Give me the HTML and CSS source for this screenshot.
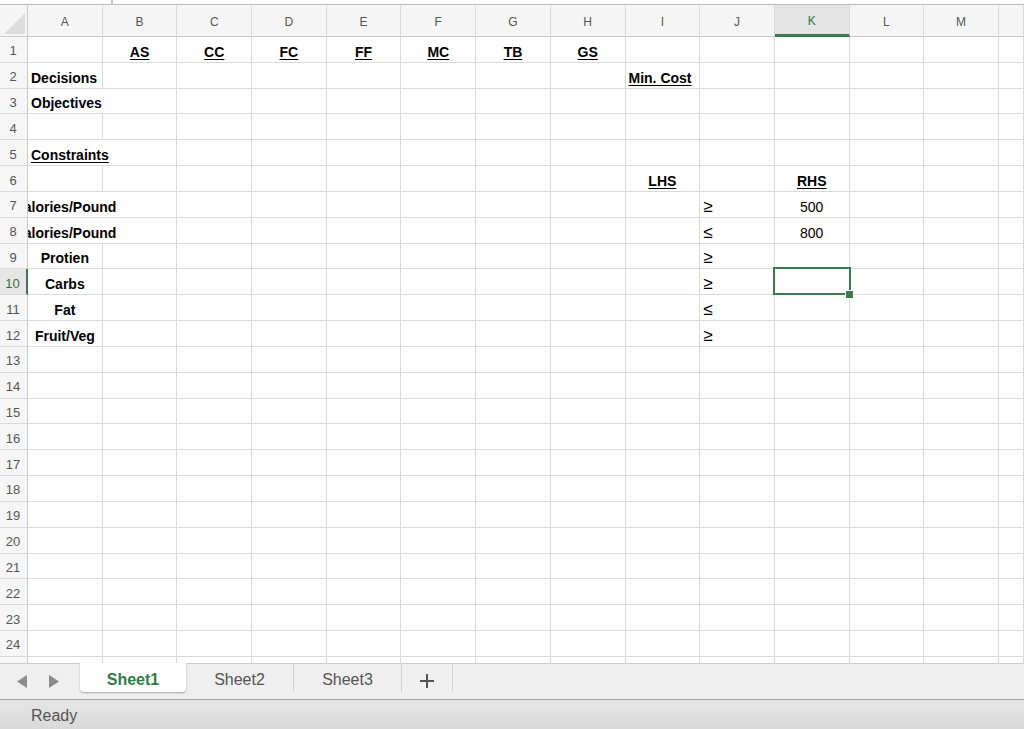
FILE: index.html
```html
<!DOCTYPE html>
<html lang="en">
<head>
<meta charset="utf-8">
<title>Sheet1</title>
<link rel="stylesheet" href="styles.css">
</head>
<body>
<div class="app">
  <div class="formula-edge"><span class="tick"></span></div>
  <div class="sheet">
    <div class="r h">
      <div class="corner"><svg width="21" height="21" viewBox="0 0 21 21"><polygon points="21,0 21,21 0,21" fill="#dcdcdc"/></svg></div>
      <div>A</div><div>B</div><div>C</div><div>D</div><div>E</div><div>F</div><div>G</div><div>H</div><div>I</div><div>J</div><div class="hk">K</div><div>L</div><div>M</div><div></div>
    </div>
    <div class="r"><div class="rh">1</div><div></div><div class="c u">AS</div><div class="c u">CC</div><div class="c u">FC</div><div class="c u">FF</div><div class="c u">MC</div><div class="c u">TB</div><div class="c u">GS</div><div></div><div></div><div></div><div></div><div></div><div></div></div>
    <div class="r"><div class="rh">2</div><div>Decisions</div><div></div><div></div><div></div><div></div><div></div><div></div><div></div><div class="u">Min. Cost</div><div></div><div></div><div></div><div></div><div></div></div>
    <div class="r"><div class="rh">3</div><div class="s2">Objectives</div><div></div><div></div><div></div><div></div><div></div><div></div><div></div><div></div><div></div><div></div><div></div><div></div></div>
    <div class="r"><div class="rh">4</div><div></div><div></div><div></div><div></div><div></div><div></div><div></div><div></div><div></div><div></div><div></div><div></div><div></div><div></div></div>
    <div class="r"><div class="rh">5</div><div class="s2 u">Constraints</div><div></div><div></div><div></div><div></div><div></div><div></div><div></div><div></div><div></div><div></div><div></div><div></div></div>
    <div class="r"><div class="rh">6</div><div></div><div></div><div></div><div></div><div></div><div></div><div></div><div></div><div class="c u">LHS</div><div></div><div class="c u">RHS</div><div></div><div></div><div></div></div>
    <div class="r"><div class="rh">7</div><div class="s2 ctr"><span class="ovc">Calories/Pound</span></div><div></div><div></div><div></div><div></div><div></div><div></div><div></div><div class="op">≥</div><div class="c n">500</div><div></div><div></div><div></div></div>
    <div class="r"><div class="rh">8</div><div class="s2 ctr"><span class="ovc">Calories/Pound</span></div><div></div><div></div><div></div><div></div><div></div><div></div><div></div><div class="op">≤</div><div class="c n">800</div><div></div><div></div><div></div></div>
    <div class="r"><div class="rh">9</div><div class="c">Protien</div><div></div><div></div><div></div><div></div><div></div><div></div><div></div><div></div><div class="op">≥</div><div></div><div></div><div></div><div></div></div>
    <div class="r"><div class="rh rk">10</div><div class="c">Carbs</div><div></div><div></div><div></div><div></div><div></div><div></div><div></div><div></div><div class="op">≥</div><div class="sel"></div><div></div><div></div><div></div></div>
    <div class="r"><div class="rh">11</div><div class="c">Fat</div><div></div><div></div><div></div><div></div><div></div><div></div><div></div><div></div><div class="op">≤</div><div></div><div></div><div></div><div></div></div>
    <div class="r"><div class="rh">12</div><div class="c">Fruit/Veg</div><div></div><div></div><div></div><div></div><div></div><div></div><div></div><div></div><div class="op">≥</div><div></div><div></div><div></div><div></div></div>
    <div class="r"><div class="rh">13</div><div></div><div></div><div></div><div></div><div></div><div></div><div></div><div></div><div></div><div></div><div></div><div></div><div></div><div></div></div>
    <div class="r"><div class="rh">14</div><div></div><div></div><div></div><div></div><div></div><div></div><div></div><div></div><div></div><div></div><div></div><div></div><div></div><div></div></div>
    <div class="r"><div class="rh">15</div><div></div><div></div><div></div><div></div><div></div><div></div><div></div><div></div><div></div><div></div><div></div><div></div><div></div><div></div></div>
    <div class="r"><div class="rh">16</div><div></div><div></div><div></div><div></div><div></div><div></div><div></div><div></div><div></div><div></div><div></div><div></div><div></div><div></div></div>
    <div class="r"><div class="rh">17</div><div></div><div></div><div></div><div></div><div></div><div></div><div></div><div></div><div></div><div></div><div></div><div></div><div></div><div></div></div>
    <div class="r"><div class="rh">18</div><div></div><div></div><div></div><div></div><div></div><div></div><div></div><div></div><div></div><div></div><div></div><div></div><div></div><div></div></div>
    <div class="r"><div class="rh">19</div><div></div><div></div><div></div><div></div><div></div><div></div><div></div><div></div><div></div><div></div><div></div><div></div><div></div><div></div></div>
    <div class="r"><div class="rh">20</div><div></div><div></div><div></div><div></div><div></div><div></div><div></div><div></div><div></div><div></div><div></div><div></div><div></div><div></div></div>
    <div class="r"><div class="rh">21</div><div></div><div></div><div></div><div></div><div></div><div></div><div></div><div></div><div></div><div></div><div></div><div></div><div></div><div></div></div>
    <div class="r"><div class="rh">22</div><div></div><div></div><div></div><div></div><div></div><div></div><div></div><div></div><div></div><div></div><div></div><div></div><div></div><div></div></div>
    <div class="r"><div class="rh">23</div><div></div><div></div><div></div><div></div><div></div><div></div><div></div><div></div><div></div><div></div><div></div><div></div><div></div><div></div></div>
    <div class="r"><div class="rh">24</div><div></div><div></div><div></div><div></div><div></div><div></div><div></div><div></div><div></div><div></div><div></div><div></div><div></div><div></div></div>
    <div class="r"><div class="rh">25</div><div></div><div></div><div></div><div></div><div></div><div></div><div></div><div></div><div></div><div></div><div></div><div></div><div></div><div></div></div>
  </div>
  <div class="tabs">
    <div class="nav">
      <svg width="10" height="13" viewBox="0 0 10 13"><polygon points="10,0 10,13 0,6.5" fill="#8c8c8c"/></svg>
      <svg width="10" height="13" viewBox="0 0 10 13"><polygon points="0,0 0,13 10,6.5" fill="#8c8c8c"/></svg>
    </div>
    <div class="tab active">Sheet1</div>
    <div class="tab">Sheet2</div>
    <div class="tab">Sheet3</div>
    <div class="tab add"><svg width="14" height="14" viewBox="0 0 14 14"><path d="M7 0V14M0 7H14" stroke="#555" stroke-width="2"/></svg></div>
  </div>
  <div class="status">Ready</div>
</div>
</body>
</html>
```

FILE: styles.css
```css
* { box-sizing: border-box; }
html, body { margin: 0; padding: 0; }
body {
  width: 1024px;
  height: 729px;
  overflow: hidden;
  background: #fff;
  font-family: "Liberation Sans", Arial, Helvetica, sans-serif;
  color: #000;
}
.app { display: flex; flex-direction: column; height: 729px; }
.formula-edge { height: 4px; flex: none; display: flex; padding-left: 111px; }
.tick { width: 2px; height: 4px; background: #c9c9c9; }

.sheet {
  flex: none;
  height: 659px;
  border-top: 1px solid #bcbcbc;
  overflow: hidden;
}
.r {
  display: grid;
  grid-template-columns: 28px repeat(13, 74.7px) 1fr;
  height: 25.833px;
}
.r > div {
  min-width: 0;
  display: flex;
  align-items: flex-end;
  padding: 0 3px 2px;
  border-right: 1px solid #dadada;
  border-bottom: 1px solid #dadada;
  font-size: 14px;
  line-height: 16px;
  font-weight: 700;
  white-space: nowrap;
}
.r.h { height: 32px; }
.r.h > div {
  background: #f5f5f5;
  align-items: center;
  justify-content: center;
  padding: 3px 0 0;
  font-size: 12px;
  font-weight: 400;
  color: #555;
  border-bottom-color: #cacaca;
}
.r.h > .corner {
  align-items: flex-end;
  justify-content: flex-end;
  padding: 0 2px 2px 0;
  border-right-color: #cacaca;
}
.r.h > .hk {
  background: #e4e4e4;
  color: #2e7545;
  border-bottom: 3px solid #3b7a4c;
}
.r > .rh {
  justify-content: center;
  align-items: center;
  padding: 4px 1px 0 0;
  font-size: 13px;
  font-weight: 400;
  color: #555;
  background: #f6f6f6;
  border-right-color: #cacaca;
}
.r > .rk {
  background: #e6e6e6;
  color: #2e7545;
  border-right: 2px solid #3b7a4c;
}
.r > .c { justify-content: center; }
.r > .n { font-weight: 400; }
.u {
  text-decoration: underline;
  text-decoration-thickness: 1px;
  text-underline-offset: 2px;
}
.r > .s2 { grid-column: span 2; }
.r > .ctr { padding-left: 0; overflow: hidden; }
.ovc { display: flex; justify-content: center; width: 74px; flex: none; }
.r > .op { font-weight: 400; font-size: 17px; padding-bottom: 2px; }
.r > .sel { position: relative; z-index: 2; }
.sel::after {
  content: "";
  position: absolute;
  left: -2px;
  top: -2px;
  right: -2px;
  bottom: -1px;
  border: 2px solid #3b7a4c;
}
.sel::before {
  content: "";
  position: absolute;
  width: 7px;
  height: 7px;
  right: -4px;
  bottom: -4px;
  background: #3b7a4c;
  box-shadow: 0 0 0 1px #fff;
  z-index: 1;
}

.tabs {
  flex: none;
  height: 37px;
  display: flex;
  align-items: flex-start;
  background: #efefef;
  border-top: 1px solid #cdcdcd;
  border-bottom: 1px solid #a3a3a3;
}
.nav {
  width: 80px;
  height: 35px;
  display: flex;
  align-items: center;
  padding-left: 17px;
  gap: 22px;
}
.tab {
  width: 108px;
  height: 28px;
  display: flex;
  align-items: center;
  justify-content: center;
  padding-top: 3px;
  font-size: 16px;
  color: #555;
  border-right: 1px solid #d2d2d2;
}
.tab.active {
  width: 106px;
  height: 29px;
  margin-top: -1px;
  padding-top: 4px;
  background: #fff;
  color: #2f7d47;
  font-weight: 700;
  border-right: none;
  border-radius: 0 0 4px 4px;
  box-shadow: 0 1px 2px rgba(0, 0, 0, 0.3);
}
.tab.add { width: 51px; padding-top: 5px; }
.status {
  flex: none;
  height: 29px;
  display: flex;
  align-items: center;
  padding: 3px 0 0 31px;
  font-size: 16px;
  color: #555;
  background: linear-gradient(#e6e6e6, #d9d9d9);
}
```
